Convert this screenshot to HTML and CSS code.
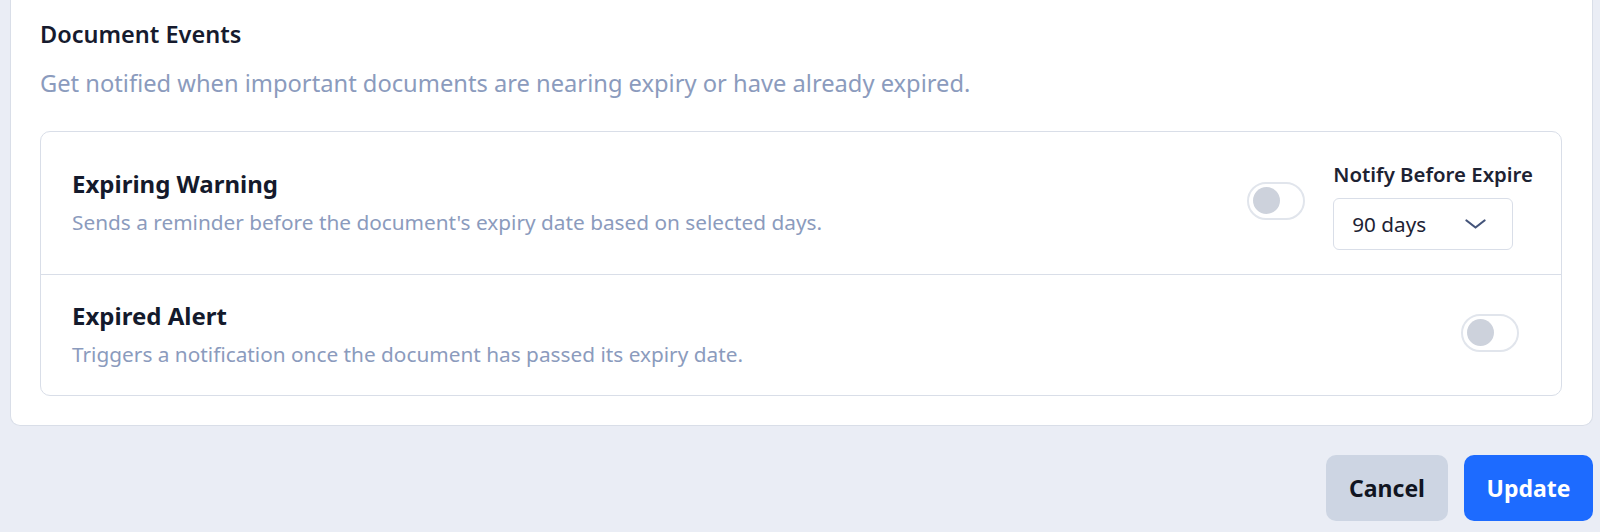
FILE: index.html
```html
<!DOCTYPE html>
<html lang="en">
<head>
<meta charset="utf-8">
<title>Document Events</title>
<link rel="stylesheet" href="styles.css">
</head>
<body>
<main class="page">
  <section class="card">
    <h2 class="card-title">Document Events</h2>
    <p class="card-sub">Get notified when important documents are nearing expiry or have already expired.</p>
    <div class="events">
      <div class="event event-first">
        <div class="event-text">
          <h3 class="event-title">Expiring Warning</h3>
          <p class="event-desc">Sends a reminder before the document's expiry date based on selected days.</p>
        </div>
        <span class="toggle"><span class="knob"></span></span>
        <div class="notify">
          <label class="notify-label">Notify Before Expire</label>
          <div class="select">
            <span class="select-value">90 days</span>
            <svg class="chevron" width="21" height="10" viewBox="0 0 21 10"><polyline points="1.5,1.5 10.5,8.5 19.5,1.5" fill="none" stroke="#44547a" stroke-width="2.2" stroke-linecap="round" stroke-linejoin="round"/></svg>
          </div>
        </div>
      </div>
      <div class="event event-second">
        <div class="event-text">
          <h3 class="event-title">Expired Alert</h3>
          <p class="event-desc">Triggers a notification once the document has passed its expiry date.</p>
        </div>
        <span class="toggle toggle-end"><span class="knob"></span></span>
      </div>
    </div>
  </section>
  <div class="actions">
    <button class="btn btn-cancel">Cancel</button>
    <button class="btn btn-update">Update</button>
  </div>
</main>
</body>
</html>
```
FILE: styles.css
```css
* { box-sizing: border-box; }
html, body { margin: 0; padding: 0; }
body {
  background: #eaedf5;
  font-family: "Noto Sans", "Open Sans", Arial, sans-serif;
  color: #1a1f33;
  width: 1600px;
  height: 532px;
  overflow: hidden;
}
.page {
  padding: 0 7px 0 10px;
}
.card {
  background: #fff;
  border: 1px solid #d9dee8;
  border-top: none;
  border-radius: 0 0 10px 10px;
  padding: 19px 30px 29px 29px;
}
.card-title {
  margin: 0;
  font-size: 23.5px;
  font-weight: 600;
  line-height: 30px;
  color: #161b2e;
}
.card-sub {
  margin: 19px 0 0;
  font-size: 23.7px;
  line-height: 30px;
  color: #8b9bbd;
}
.events {
  margin-top: 33px;
  border: 1px solid #d9dee8;
  border-radius: 10px;
}
.event {
  display: flex;
  align-items: center;
  padding: 0 28px 0 31px;
}
.event-first {
  height: 143px;
  border-bottom: 1px solid #d9dee8;
}
.event-second {
  height: 120px;
}
.event-text {
  flex: 1;
}
.event-title {
  margin: 0;
  font-size: 24px;
  font-weight: 700;
  line-height: 30px;
  color: #141a2c;
}
.event-desc {
  margin: 8px 0 0;
  font-size: 20.8px;
  line-height: 30px;
  color: #8b9bbd;
}
.toggle {
  width: 58px;
  height: 38px;
  margin-top: -5px;
  border: 2px solid #e1e5ec;
  border-radius: 19px;
  background: #fff;
  display: flex;
  align-items: center;
  padding-left: 4px;
  flex: none;
}
.knob {
  width: 27px;
  height: 27px;
  border-radius: 50%;
  background: #cdd2dc;
}
.toggle-end { margin-right: 14px; }
.notify {
  margin-left: 28px;
  display: flex;
  flex-direction: column;
  margin-top: 6px;
}
.notify-label {
  font-size: 20.4px;
  font-weight: 600;
  line-height: 24px;
  color: #1d2233;
}
.select {
  margin-top: 12px;
  width: 180px;
  height: 52px;
  border: 1px solid #d9dee8;
  border-radius: 6px;
  display: flex;
  align-items: center;
  padding: 0 26px 0 18px;
  justify-content: space-between;
}
.select-value {
  font-size: 20.7px;
  color: #1d2233;
}
.chevron { flex: none; }
.actions {
  display: flex;
  justify-content: flex-end;
  gap: 16px;
  margin-top: 29px;
}
.btn {
  height: 66px;
  border: none;
  border-radius: 10px;
  font-family: "Noto Sans", "Open Sans", Arial, sans-serif;
  font-size: 23px;
  font-weight: 700;
  padding: 0;
}
.btn-cancel {
  width: 122px;
  background: #cdd5e3;
  color: #111522;
}
.btn-update {
  width: 129px;
  background: #1d6bff;
  color: #fff;
}
```
